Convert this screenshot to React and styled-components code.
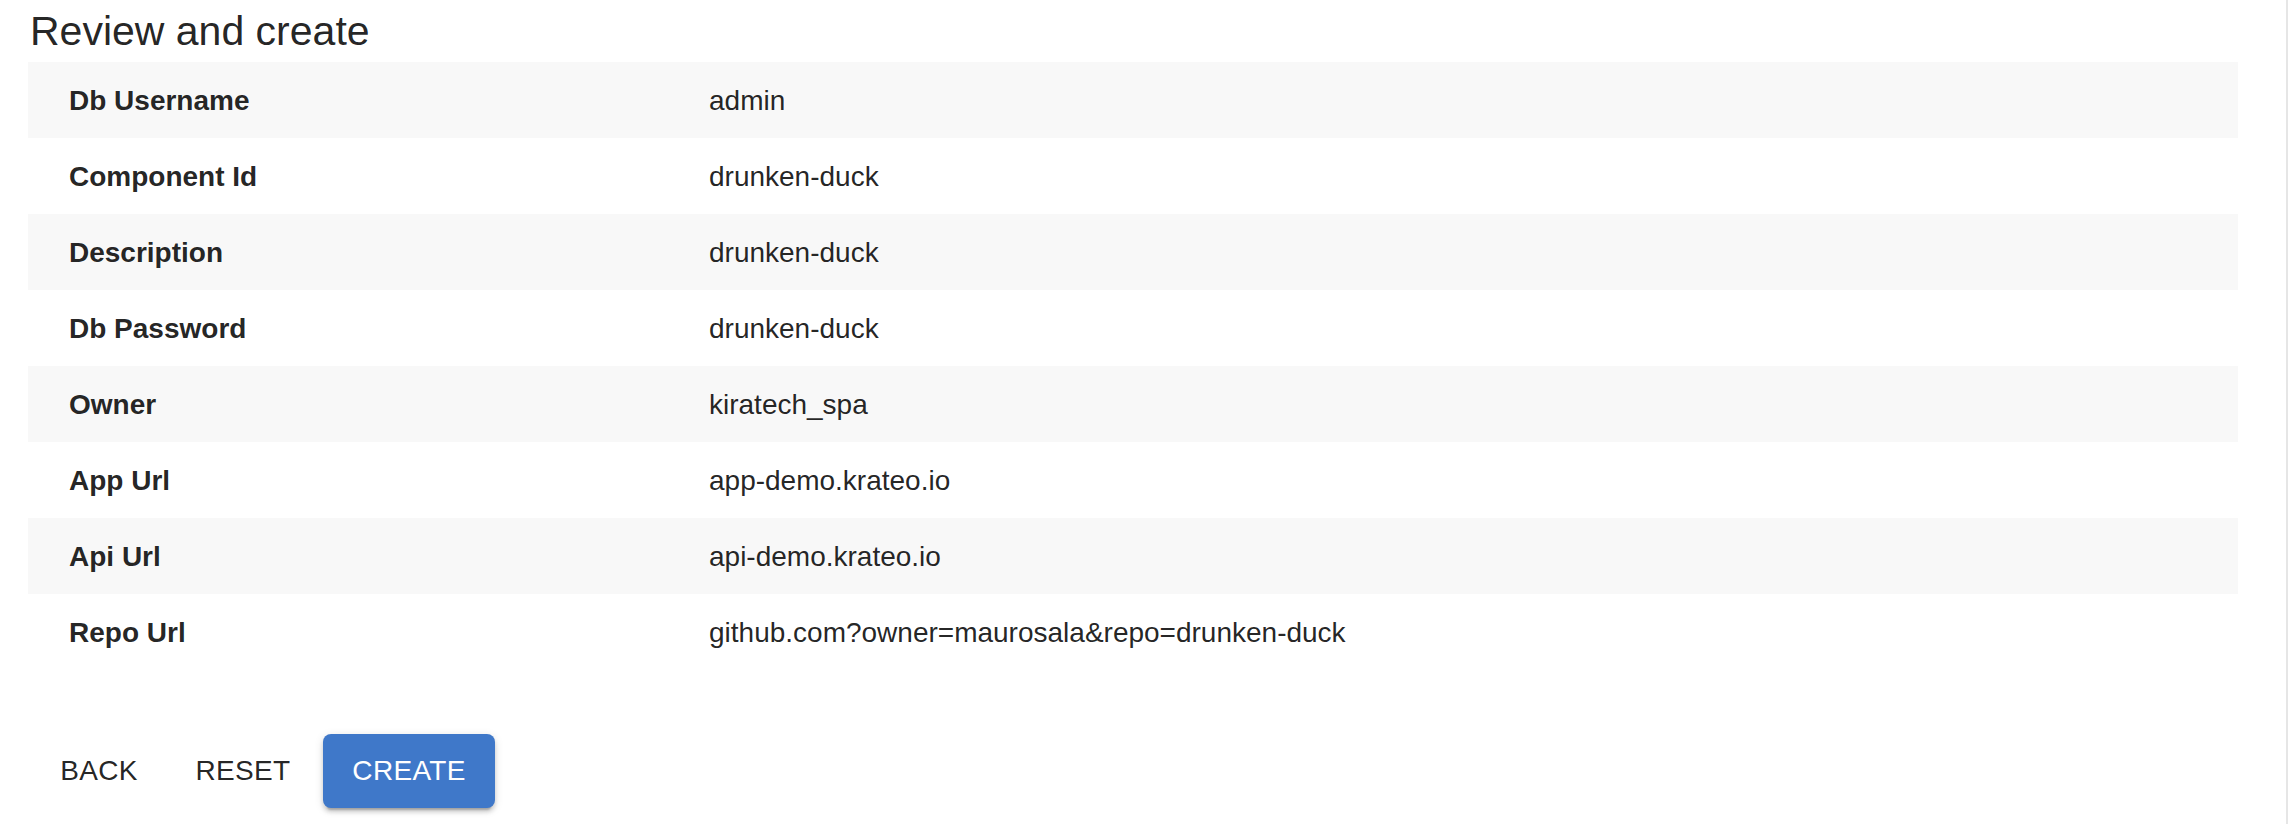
import styled, { createGlobalStyle } from 'styled-components'

const GlobalStyle = createGlobalStyle`
  html, body {
    margin: 0;
    padding: 0;
    background: #ffffff;
  }
  body {
    font-family: "Liberation Sans", Arial, Helvetica, sans-serif;
    color: rgba(0, 0, 0, 0.87);
  }
`

const colors = {
  stripe: '#f8f8f8',
  text: 'rgba(0, 0, 0, 0.87)',
  primary: '#3f78c9',
  white: '#ffffff',
  edge: '#e6e6e6',
}

const fields = [
  { id: 'dbUsername', label: 'Db Username', value: 'admin' },
  { id: 'componentId', label: 'Component Id', value: 'drunken-duck' },
  { id: 'description', label: 'Description', value: 'drunken-duck' },
  { id: 'dbPassword', label: 'Db Password', value: 'drunken-duck' },
  { id: 'owner', label: 'Owner', value: 'kiratech_spa' },
  { id: 'appUrl', label: 'App Url', value: 'app-demo.krateo.io' },
  { id: 'apiUrl', label: 'Api Url', value: 'api-demo.krateo.io' },
  { id: 'repoUrl', label: 'Repo Url', value: 'github.com?owner=maurosala&repo=drunken-duck' },
]

const App = () => {
  return (
    <>
      <GlobalStyle />
      <Page>
        <Content>
          <Title>Review and create</Title>
          <Table>
            {fields.map((field, index) => (
              <Row key={field.id} striped={index % 2 === 0}>
                <Label>{field.label}</Label>
                <Value>{field.value}</Value>
              </Row>
            ))}
          </Table>
          <Actions>
            <TextButton>Back</TextButton>
            <TextButton>Reset</TextButton>
            <ContainedButton>Create</ContainedButton>
          </Actions>
        </Content>
      </Page>
    </>
  )
}

const Page = styled.div`
  width: 2286px;
  height: 824px;
  border-right: 2px solid ${colors.edge};
  box-sizing: content-box;
`

const Content = styled.main`
  width: 2210px;
  padding-left: 28px;
`

const Title = styled.h2`
  margin: 0;
  padding-left: 2px;
  font-size: 41px;
  font-weight: 400;
  line-height: 62px;
  color: ${colors.text};
`

const Table = styled.div`
  display: flex;
  flex-direction: column;
`

const Row = styled.div.withConfig({ shouldForwardProp: (prop) => prop !== 'striped' })`
  display: grid;
  grid-template-columns: 640px 1fr;
  align-items: center;
  box-sizing: border-box;
  height: 76px;
  padding: 2px 41px 0;
  background-color: ${({ striped }) => (striped ? colors.stripe : colors.white)};
  font-size: 28px;
  line-height: 1.43;
`

const Label = styled.div`
  font-weight: 700;
  color: ${colors.text};
`

const Value = styled.div`
  color: ${colors.text};
`

const Actions = styled.div`
  display: flex;
  align-items: center;
  gap: 16px;
  margin-top: 64px;
  margin-left: 7px;
`

const BaseButton = styled.button`
  display: inline-flex;
  align-items: center;
  justify-content: center;
  min-width: 128px;
  height: 74px;
  border: none;
  border-radius: 8px;
  font-family: "Liberation Sans", Arial, Helvetica, sans-serif;
  font-size: 28px;
  font-weight: 500;
  letter-spacing: 0.3px;
  text-transform: uppercase;
  cursor: pointer;
`

const TextButton = styled(BaseButton)`
  padding: 12px 16px;
  background: transparent;
  color: ${colors.text};
`

const ContainedButton = styled(BaseButton)`
  padding: 12px 32px;
  width: 172px;
  background-color: ${colors.primary};
  color: ${colors.white};
  box-shadow: 0px 6px 2px -4px rgba(0, 0, 0, 0.2), 0px 4px 4px 0px rgba(0, 0, 0, 0.14),
    0px 2px 10px 0px rgba(0, 0, 0, 0.12);
`

export default App
